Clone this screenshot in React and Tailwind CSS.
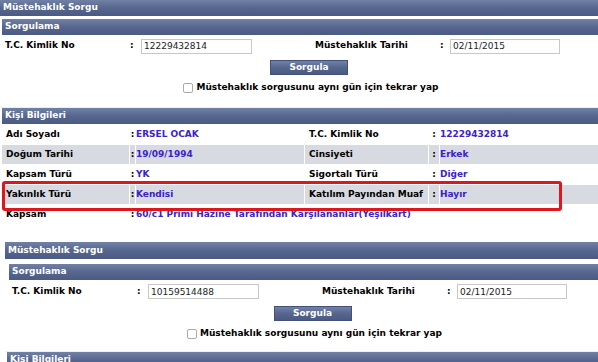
import { useState } from "react";

const bar = "bg-gradient-to-b from-[#7181a6] via-[#56668e] to-[#4a5a82] text-white font-bold";

const Bar = ({ title, className = "" }) => (
  <div className={`${bar} h-[16px] flex items-center pl-[3px] text-[9px] ${className}`}>{title}</div>
);

const QueryForm = ({ tc, date, pad }) => {
  const [checked, setChecked] = useState(false);
  return (
    <div className={pad}>
      <Bar title="Sorgulama" className="ml-[2px]" />
      <div className="flex items-center h-[22px] text-[9px] font-bold">
        <div className="w-[130px] pl-[5px]">T.C. Kimlik No</div>
        <div className="w-[11px]">:</div>
        <input
          className="w-[111px] h-[15px] border border-[#c8c8c8] bg-white px-[2px] text-[9px] font-normal text-[#222] outline-none"
          defaultValue={tc}
        />
        <div className="w-[63px]" />
        <div className="w-[125px]">Müstehaklık Tarihi</div>
        <div className="w-[10px]">:</div>
        <input
          className="w-[110px] h-[15px] border border-[#c8c8c8] bg-white px-[2px] text-[9px] font-normal text-[#222] outline-none"
          defaultValue={date}
        />
      </div>
      <div className="flex justify-center pl-[20px] mt-[3px]">
        <button className={`${bar} w-[78px] h-[15px] text-[9px] bg-[#56668e] border border-[#43507a]`}>Sorgula</button>
      </div>
      <label className="flex items-center justify-center gap-[3px] pl-[24px] h-[16px] mt-[5px] text-[9px] font-bold">
        <input
          type="checkbox"
          checked={checked}
          onChange={() => setChecked(!checked)}
          className="w-[10px] h-[10px] appearance-none border border-[#aaa] rounded-[2px] bg-white"
        />
        Müstehaklık sorgusunu aynı gün için tekrar yap
      </label>
    </div>
  );
};

const rows = [
  ["Adı Soyadı", "ERSEL OCAK", "T.C. Kimlik No", "12229432814"],
  ["Doğum Tarihi", "19/09/1994", "Cinsiyeti", "Erkek"],
  ["Kapsam Türü", "YK", "Sigortalı Türü", "Diğer"],
  ["Yakınlık Türü", "Kendisi", "Katılım Payından Muaf", "Hayır"],
];

const App = () => {
  return (
    <div className="w-[598px] h-[362px] overflow-hidden bg-white text-black font-['DejaVu_Sans',sans-serif] relative">
      <Bar title="Müstehaklık Sorgu" className="h-[13px] pl-[2px]" />
      <div className="h-[3px]" />
      <QueryForm tc="12229432814" date="02/11/2015" pad="" />
      <div className="h-[12px] border-b border-[#eee]" />
      <Bar title="Kişi Bilgileri" className="ml-[2px]" />
      <table className="w-full border-separate border-spacing-[1px] text-[9px] font-bold ml-[1px]">
        <tbody>
          {rows.map((r, i) => (
            <tr key={i} className={i % 2 ? "bg-[#d7dae1]" : "bg-white"}>
              <td className="w-[127px] h-[19px] pl-[4px]">{r[0]}</td>
              <td className="w-[5px] text-center">:</td>
              <td className="w-[168px] text-[#3a22cc]">{r[1]}</td>
              <td className="w-[123px] pl-[4px]">{r[2]}</td>
              <td className="w-[10px] text-center">:</td>
              <td className="text-[#3a22cc]">{r[3]}</td>
            </tr>
          ))}
          <tr>
            <td className="h-[19px] pl-[4px]">Kapsam</td>
            <td className="text-center">:</td>
            <td colSpan={4} className="text-[#3a22cc]">60/c1 Primi Hazine Tarafından Karşılananlar(Yeşilkart)</td>
          </tr>
        </tbody>
      </table>
      <div className="absolute left-[2px] top-[181px] w-[560px] h-[30px] border-[3px] border-[#e0161e] rounded-[3px]" />
      <div className="h-[17px]" />
      <div className="pl-[5px]">
        <Bar title="Müstehaklık Sorgu" className="h-[17px]" />
        <div className="h-[5px]" />
        <QueryForm tc="10159514488" date="02/11/2015" pad="pl-[2px] [&>div:nth-child(2)]:h-[23px]" />
        <div className="h-[10px] border-b border-[#eee]" />
        <Bar title="Kişi Bilgileri" className="ml-[2px]" />
      </div>
    </div>
  );
};

export default App;
